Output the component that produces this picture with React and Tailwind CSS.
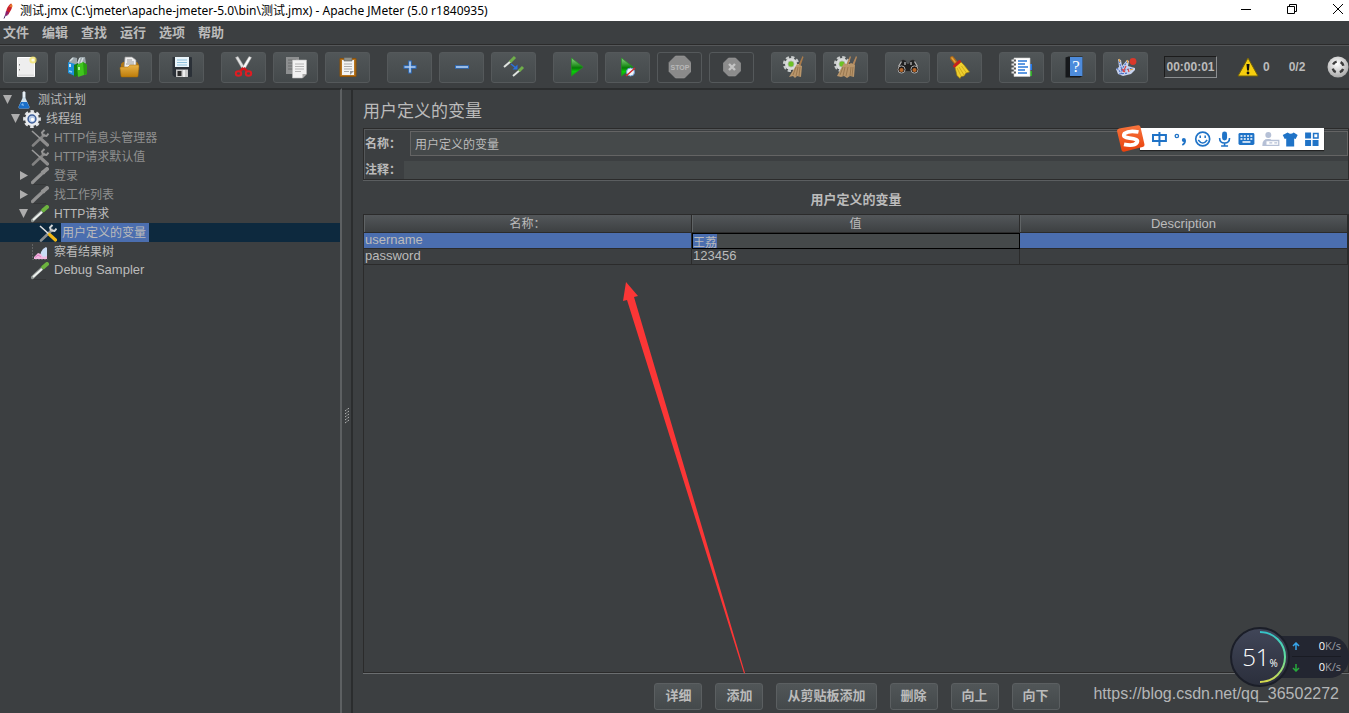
import React, { useState } from 'react';

const menus = ['文件', '编辑', '查找', '运行', '选项', '帮助'];

const Icon = ({ children }) => (
  <svg viewBox="0 0 24 24" className="h-6 w-6 shrink-0" fill="none">{children}</svg>
);

const Gradients = () => (
  <svg className="absolute h-0 w-0" aria-hidden="true">
    <defs>
      <linearGradient id="play" x1="0" y1="0" x2="0" y2="1">
        <stop offset="0" stopColor="#8fce86" />
        <stop offset="0.45" stopColor="#1f8f1c" />
        <stop offset="0.55" stopColor="#067a06" />
        <stop offset="0.75" stopColor="#08cc08" />
        <stop offset="1" stopColor="#0fa00f" />
      </linearGradient>
      <linearGradient id="folder" x1="0" y1="0" x2="0" y2="1">
        <stop offset="0" stopColor="#e9b347" />
        <stop offset="1" stopColor="#bd7c0a" />
      </linearGradient>
      <linearGradient id="ring" x1="0" y1="0" x2="0" y2="1">
        <stop offset="0" stopColor="#35c3c9" />
        <stop offset="0.5" stopColor="#5fe0a0" />
        <stop offset="1" stopColor="#d5d84c" />
      </linearGradient>
      <linearGradient id="sogou" x1="0" y1="0" x2="0" y2="1">
        <stop offset="0" stopColor="#f7743c" />
        <stop offset="1" stopColor="#e8400c" />
      </linearGradient>
      <radialGradient id="ball" cx="0.45" cy="0.35" r="0.65">
        <stop offset="0" stopColor="#ffffff" />
        <stop offset="1" stopColor="#a9a9a9" />
      </radialGradient>
    </defs>
  </svg>
);

const NewIcon = () => (
  <Icon>
    <path d="M4.500 2.500h17v19h-17z" fill="#eeeeee" stroke="#ffffff" />
    <path d="M5 19.500h16v2H5z" fill="#dcdcdc" />
    <path d="M6.500 9v1.500M6.500 14v1.500" stroke="#888" />
    <circle cx="20" cy="5" r="3.600" fill="#f2e36b" opacity="0.8" />
    <circle cx="20" cy="5" r="1.600" fill="#fffce0" />
  </Icon>
);

const TemplatesIcon = () => (
  <Icon>
    <path d="M4 6l4-4 4 1v5l3-6h5l1 6-8 5-9-2z" fill="#9aa5aa" />
    <path d="M5 6l3-3M15 3l-2 5M18 3l-2 5" stroke="#d5dde0" strokeWidth="1.500" />
    <path d="M3 7l7 2v12l-7-3z" fill="#1d8fd8" />
    <path d="M5 9v3" stroke="#fff" strokeWidth="1.600" />
    <path d="M4 16l3 1" stroke="#8fd0f5" strokeWidth="1.500" />
    <path d="M9 10l4-2v12l-3 2-1-1z" fill="#157a12" />
    <path d="M12 10l6-3 4 3v9l-9 3z" fill="#3fc51d" />
    <path d="M18 7l4 3v9l-3 1z" fill="#2a9b12" />
    <path d="M14 12v3" stroke="#d9ffd0" strokeWidth="1.500" />
  </Icon>
);

const OpenIcon = () => (
  <Icon>
    <path d="M4 9l2-2h14l2 3v5H4z" fill="#b07614" />
    <path d="M8 2h7l4 3v8H7z" fill="#f0f0f0" stroke="#8f8f8f" strokeWidth="0.7" />
    <path d="M10 5h5M10 7h7M9 9h8" stroke="#999" />
    <path d="M3 13q0-1 1-1h7l2-2h8q1 0 1 1l-1 10q0 1-1 1H5q-1 0-1-1z" fill="url(#folder)" stroke="#a96d06" strokeWidth="0.5" />
  </Icon>
);

const SaveIcon = () => (
  <Icon>
    <path d="M4 2h18q1 0 1 1v18q0 1-1 1H5.500l-2-2V2.500z" fill="#2b3138" />
    <path d="M6 2h14v10H6z" fill="#eaf5fb" />
    <path d="M8 5h10M8 7.500h10M8 10h10" stroke="#8fc1dc" />
    <path d="M7 14.500h12V22H7z" fill="#c9c9c9" />
    <path d="M8.500 16h4v5h-4z" fill="#2a2a2a" />
    <path d="M14 15h2v7h-2z" fill="#eee" />
  </Icon>
);

const CutIcon = () => (
  <Icon>
    <path d="M4.500 2.500l2.500-1 7 11.500-2.500 1.500z" fill="#e2e2e2" stroke="#a5a5a5" strokeWidth="0.5" />
    <path d="M20.500 2.500l-2.500-1-7 11.500 2.500 1.500z" fill="#f8f8f8" stroke="#a5a5a5" strokeWidth="0.5" />
    <path d="M12.500 13l-3.500 3M12.500 13l3.500 3" stroke="#d4141a" strokeWidth="2.400" />
    <ellipse cx="7.500" cy="18.500" rx="2.700" ry="2.200" stroke="#e01c22" strokeWidth="2" />
    <ellipse cx="17.500" cy="18.500" rx="2.700" ry="2.200" stroke="#e01c22" strokeWidth="2" />
  </Icon>
);

const CopyIcon = () => (
  <Icon>
    <path d="M3 2h13v17H3z" fill="#8d8f90" />
    <path d="M5 5h8M5 8h8M5 11h8M5 14h8" stroke="#6a6c6d" />
    <path d="M9.500 5h14v14l-4 4h-10z" fill="#f1f1f1" stroke="#bbb" strokeWidth="0.6" />
    <path d="M12 9h9M12 11.500h9M12 14h9M12 16.500h6" stroke="#b4b4b4" />
    <path d="M19.500 23v-4h4z" fill="#a8a8a8" />
  </Icon>
);

const PasteIcon = () => (
  <Icon>
    <path d="M5 3.500h16v18H5z" fill="#b8751d" stroke="#8c520a" />
    <path d="M7 5h12v15H7z" fill="#f4f4f4" />
    <path d="M9 2.500h8v3.500H9z" fill="#8c8f8a" stroke="#5b5d59" strokeWidth="0.6" />
    <path d="M9 9h8M9 11.500h8M9 14h8M9 16.500h5" stroke="#aaa" />
    <path d="M15 20v-4h4z" fill="#999" />
  </Icon>
);

const PlusIcon = () => (
  <Icon>
    <path d="M13 5.500v13M6.500 12h13" stroke="#2d6fc4" strokeWidth="3.400" />
    <path d="M13 6.500v11M7.500 12h11" stroke="#b5d0f0" strokeWidth="1.600" />
  </Icon>
);

const MinusIcon = () => (
  <Icon>
    <path d="M6 12h14" stroke="#2d6fc4" strokeWidth="3.400" />
    <path d="M7 12h12" stroke="#b5d0f0" strokeWidth="1.600" />
  </Icon>
);

const ToggleIcon = () => (
  <Icon>
    <path d="M3 12l7-6" stroke="#dfe3df" strokeWidth="2" />
    <path d="M9 7l5-5" stroke="#6fae4a" strokeWidth="3" />
    <path d="M12 21l7-6" stroke="#dfe3df" strokeWidth="2" />
    <path d="M18 16l4-4" stroke="#6fae4a" strokeWidth="3" />
    <path d="M10 9l5 4" stroke="#2b70dd" strokeWidth="1.500" />
    <path d="M16.500 9.500v5h-5z" fill="#2b70dd" />
  </Icon>
);

const PlayIcon = () => (
  <Icon>
    <path d="M8.500 3l11.500 9-11.500 9z" fill="url(#play)" stroke="#1f9a1b" strokeWidth="0.6" />
  </Icon>
);

const PlayNoTimersIcon = () => (
  <Icon>
    <path d="M6.500 3l11.500 9-11.500 9z" fill="url(#play)" stroke="#1f9a1b" strokeWidth="0.6" />
    <circle cx="15.500" cy="17" r="4" fill="#eef4fb" stroke="#6b9ad0" />
    <path d="M11 21l9-8" stroke="#d42626" strokeWidth="1.400" />
  </Icon>
);

const StopIcon = () => (
  <Icon>
    <path d="M8.500 1h9L24 7.500v9L17.500 23h-9L2 16.500v-9z" fill="#8a8a8a" stroke="#9b9b9b" strokeWidth="0.6" />
    <text x="13" y="15" textAnchor="middle" fontFamily="Liberation Sans, sans-serif" fontSize="7" fontWeight="700" fill="#b8b8b8">STOP</text>
  </Icon>
);

const ShutdownIcon = () => (
  <Icon>
    <path d="M9.500 3h7l5 5v8l-5 5h-7l-5-5V8z" fill="#8c8c8c" stroke="#9b9b9b" strokeWidth="0.6" />
    <path d="M10 9l6 6M16 9l-6 6" stroke="#c4c4c4" strokeWidth="2.400" />
  </Icon>
);

const Gear = ({ cx }) => (
  <g>
    <circle cx={cx} cy="9" r="6.800" stroke="#c9cccc" strokeWidth="2.600" strokeDasharray="3.200 2.140" />
    <circle cx={cx} cy="9" r="6" fill="#d9dbdb" />
    <circle cx={cx} cy="9" r="3" fill="#6cc225" stroke="#a9b5a0" strokeWidth="0.8" />
  </g>
);

const ClearIcon = () => (
  <Icon>
    <Gear cx="10" />
    <path d="M21.500 1l1 1-3 9-2-1z" fill="#a87b4c" />
    <path d="M16 9l5 2-1 11-4-1-2 2-2-2-4 1z" fill="#b9966b" />
    <path d="M15 12l-3 8M17 12l-2 9M19 12l-1 9" stroke="#8a6a44" strokeWidth="0.7" />
  </Icon>
);

const ClearAllIcon = () => (
  <Icon>
    <Gear cx="9" />
    <path d="M17 1l1 1-3 9-2-1zM23 1l1 1-3 9-2-1z" fill="#b3875a" />
    <path d="M11 8l4 2 3-2 4 2-1 12-4-1-3 2-3-2-3 1-4-1z" fill="#b9966b" />
    <path d="M10 12l-3 8M12 12l-2 9M15 12l-2 9M18 12l-1 9M20 12l-1 9" stroke="#8a6a44" strokeWidth="0.7" />
  </Icon>
);

const SearchIcon = () => (
  <Icon>
    <path d="M6 5.500l2-1 3 1 1 3h2l1-3 3-1 2 1 4 8v3H2v-3z" fill="#202020" stroke="#555" strokeWidth="0.6" />
    <path d="M6.500 6.500l-3 5M19.500 6.500l3 5M10 7v3M16 7v3" stroke="#b5b5b5" strokeWidth="1.300" />
    <circle cx="6.500" cy="14.500" r="3.600" fill="#1f1a17" stroke="#aaa" />
    <circle cx="19.500" cy="14.500" r="3.600" fill="#1f1a17" stroke="#aaa" />
    <circle cx="6.500" cy="15" r="2.100" fill="#b8672a" />
    <circle cx="19.500" cy="15" r="2.100" fill="#b8672a" />
  </Icon>
);

const ResetSearchIcon = () => (
  <Icon>
    <path d="M5 3l4 5" stroke="#ad6a17" strokeWidth="4" strokeLinecap="round" />
    <path d="M5 3l3 4" stroke="#e3a23b" strokeWidth="1.600" strokeLinecap="round" />
    <path d="M8 12l6-5 3 3 5.500 7-3.500 1-2 3-3 .5-1 2-3-3z" fill="#efcf2e" stroke="#a58208" strokeWidth="0.6" />
    <path d="M12 12l5 8M10 13l4 8M14.500 11l5 7" stroke="#c7a315" strokeWidth="0.8" />
    <path d="M7.500 11l5-4.500" stroke="#c8201c" strokeWidth="3" strokeLinecap="round" />
  </Icon>
);

const FunctionIcon = () => (
  <Icon>
    <path d="M20 9h3v6h-3z" fill="#2478e8" />
    <path d="M20 16h3v5h-3z" fill="#2fae28" />
    <path d="M5 3h16v18.500H5z" fill="#ffffff" stroke="#cfcfcf" strokeWidth="0.6" />
    <path d="M9 6h9M9 9h7M9 12h10M9 15h7M9 18h9" stroke="#2a78d8" strokeWidth="1.300" />
    <path d="M2.500 5.500h4M2.500 9.500h4M2.500 13.500h4M2.500 17.500h4" stroke="#dddddd" strokeWidth="1.800" />
    <path d="M6 4.500v2M6 8.500v2M6 12.500v2M6 16.500v2" stroke="#222" strokeWidth="1.400" />
  </Icon>
);

const HelpIcon = () => (
  <Icon>
    <path d="M4.500 2.500l3-1h14V21L19 22.500H4.500z" fill="#16181b" />
    <path d="M9 2h12.500v19H9z" fill="#4d8bdb" />
    <text x="15" y="17" textAnchor="middle" fontFamily="Liberation Serif, serif" fontSize="17" fill="#fff">?</text>
  </Icon>
);

const LogIcon = () => (
  <Icon>
    <path d="M5 4l3 1 1 6 5-6 2 1-1 5 7 2v2l-4 4-8 2-5-2-2-5 3-2z" fill="#c7d3ee" />
    <path d="M6 6l3 9M8 15l6-8M8 16l12-3M4 13l5 6M6 19l9-1" stroke="#4b6fc5" strokeWidth="1.100" strokeDasharray="2 1" />
    <path d="M9 14l3 3M13 11l-3 6M15 14l1 3" stroke="#d94444" strokeWidth="1.200" />
    <path d="M6 4l1 3M20 14l-3 1M14 5l1 3" stroke="#e8a33a" strokeWidth="1.200" />
    <circle cx="20" cy="6.500" r="3.400" fill="#d9382b" />
  </Icon>
);

const toolGroups = [
  [['新建', NewIcon], ['模板', TemplatesIcon], ['打开', OpenIcon], ['保存', SaveIcon]],
  [['剪切', CutIcon], ['复制', CopyIcon], ['粘贴', PasteIcon]],
  [['展开', PlusIcon], ['折叠', MinusIcon], ['切换', ToggleIcon]],
  [['启动', PlayIcon], ['不停顿开始', PlayNoTimersIcon], ['停止', StopIcon, true], ['关闭', ShutdownIcon, true]],
  [['清除', ClearIcon], ['清除全部', ClearAllIcon]],
  [['搜索', SearchIcon], ['重置搜索', ResetSearchIcon]],
  [['函数助手', FunctionIcon], ['帮助', HelpIcon], ['日志', LogIcon]],
];

const TreeSvg = ({ children }) => (
  <svg viewBox="0 0 18 18" className="h-[18px] w-[18px] shrink-0" fill="none">{children}</svg>
);

const FlaskIcon = () => (
  <TreeSvg>
    <path d="M7.500 1h3v6l4 9q0 1.500-1.500 1.500H5Q3.500 17.500 3.500 16l4-9z" fill="#cfe0ec" />
    <path d="M6 11h6l2.500 5q0 1.500-1.500 1.500H5Q3.500 17.500 3.500 16z" fill="#1a6fc9" />
    <path d="M6 14l2-2 1 3z" fill="#7db8f0" />
    <path d="M9 0v6" stroke="#fff" />
  </TreeSvg>
);

const ThreadIcon = () => (
  <TreeSvg>
    <circle cx="9" cy="9" r="7.600" stroke="#e2e4e6" strokeWidth="2.600" strokeDasharray="3.500 2.469" strokeDashoffset="1.750" />
    <circle cx="9" cy="9" r="7" fill="#eceef0" />
    <circle cx="9" cy="9" r="3.900" fill="#b9cdea" stroke="#3f5f98" strokeWidth="1.500" />
    <circle cx="9.500" cy="9.500" r="1.700" fill="#fff" />
  </TreeSvg>
);

const ToolsIcon = ({ active }) => (
  <TreeSvg>
    <path d="M2 16.500L13 6" stroke={active ? '#8b8f91' : '#828282'} strokeWidth="2.600" strokeLinecap="round" />
    <path d="M12 6.500l-1-3L13.500 1M12.500 6.500l3 .5L17.500 4.500" stroke={active ? '#d5d8d9' : '#959595'} strokeWidth="2" />
    <path d="M1 2l10 9" stroke={active ? '#e2e2e2' : '#999'} strokeWidth="1.600" />
    <path d="M10.500 10.500l6 5.500" stroke={active ? '#f0b816' : '#8d8d8d'} strokeWidth="3.200" strokeLinecap="round" />
  </TreeSvg>
);

const PipetteIcon = ({ active }) => (
  <TreeSvg>
    <path d="M1 17.500h14" stroke="#333536" />
    <path d="M1.500 15.500l3-3L11 6.500" stroke={active ? '#8f9592' : '#8d8d8d'} strokeWidth="3.200" strokeLinecap="round" />
    <path d="M2 15L11 7" stroke={active ? '#eef2ef' : '#949494'} strokeWidth="1.800" />
    <path d="M10.500 4l3 3" stroke={active ? '#3c7d22' : '#909090'} strokeWidth="2" />
    <path d="M12.500 5l3.500-3" stroke={active ? '#6db33f' : '#939393'} strokeWidth="4" strokeLinecap="round" />
  </TreeSvg>
);

const ResultIcon = () => (
  <TreeSvg>
    <path d="M1.500 1v15.500h15" stroke="#606365" strokeDasharray="2 1" />
    <path d="M9 15q0-6 3-9l3-2 1 1v11H9z" fill="#c9dcf5" />
    <path d="M3 16v-2l4-4 3 1 2 3 4-1v3z" fill="#f0b8e0" />
    <path d="M4 14.500l3-2.500 3 2" stroke="#e27cc6" />
  </TreeSvg>
);

const treeNodes = [
  { text: '测试计划', pad: 'pl-[2px]', arrow: 'down', icon: <FlaskIcon /> },
  { text: '线程组', pad: 'pl-[10px]', arrow: 'down', icon: <ThreadIcon /> },
  { text: 'HTTP信息头管理器', pad: 'pl-[18px]', icon: <ToolsIcon />, disabled: true },
  { text: 'HTTP请求默认值', pad: 'pl-[18px]', icon: <ToolsIcon />, disabled: true },
  { text: '登录', pad: 'pl-[18px]', arrow: 'right', icon: <PipetteIcon />, disabled: true },
  { text: '找工作列表', pad: 'pl-[18px]', arrow: 'right', icon: <PipetteIcon />, disabled: true },
  { text: 'HTTP请求', pad: 'pl-[18px]', arrow: 'down', icon: <PipetteIcon active /> },
  { text: '用户定义的变量', pad: 'pl-[26px]', icon: <ToolsIcon active />, selected: true },
  { text: '察看结果树', pad: 'pl-[18px]', icon: <ResultIcon /> },
  { text: 'Debug Sampler', pad: 'pl-[18px]', icon: <PipetteIcon active />, latin: true },
];

const TitleBar = () => (
  <header className="flex h-[21px] items-center bg-white pl-[3px] text-black">
    <svg viewBox="0 0 12 16" className="h-4 w-3" fill="none">
      <path d="M3 9Q4 3 8 .5q2 3 0 6.500l-3 5z" fill="#c8202c" />
      <path d="M6 3.500l2.500-3q1.500 2 .5 4z" fill="#e8762c" />
      <path d="M3 8l3 1-2 4-2-1z" fill="#8a1f6e" />
      <path d="M2.500 12L1 15.500" stroke="#4b2a6b" />
    </svg>
    <h1 className="ml-[5px] font-['Noto_Sans','Noto_Sans_CJK_SC',sans-serif] text-[12px] whitespace-nowrap">
      测试.jmx (C:\jmeter\apache-jmeter-5.0\bin\测试.jmx) - Apache JMeter (5.0 r1840935)
    </h1>
    <div className="ml-auto flex h-full items-center gap-[34px] pr-[5px] pb-1">
      <button type="button" aria-label="最小化">
        <svg viewBox="0 0 12 12" className="h-3 w-3" fill="none"><path d="M1 6.500h10" stroke="#000" /></svg>
      </button>
      <button type="button" aria-label="还原">
        <svg viewBox="0 0 12 12" className="h-3 w-3" fill="none" stroke="#000">
          <path d="M1.500 3.500h7v7h-7zM3.500 3.500v-2h7v7h-2" />
        </svg>
      </button>
      <button type="button" aria-label="关闭">
        <svg viewBox="0 0 12 12" className="h-3 w-3" fill="none" stroke="#000"><path d="M1 1l10 10M11 1L1 11" /></svg>
      </button>
    </div>
  </header>
);

const ToolBar = () => (
  <div className="flex h-[43px] items-center overflow-hidden border-t border-[#555759] pl-[3px]">
    <div className="flex shrink-0 gap-[17px]">
      {toolGroups.map((group) => (
        <div key={group[0][0]} className="flex gap-[7px]">
          {group.map(([name, ToolIcon, off]) => (
            <button
              key={name}
              type="button"
              aria-label={name}
              disabled={off}
              className={`flex h-[31px] w-[45px] items-center justify-center rounded-[3px] border border-[#55595b] pr-px pb-px ${off ? '' : 'bg-linear-to-b from-[#515658] to-[#44494b]'}`}
            >
              <ToolIcon />
            </button>
          ))}
        </div>
      ))}
    </div>
    <div className="ml-4 flex shrink-0 items-center text-[12px] font-bold">
      <time className="flex h-[22px] w-[53px] items-center justify-center border border-t-[#1c1c1c] border-r-[#8b8e90] border-b-[#8b8e90] border-l-[#1c1c1c]">
        00:00:01
      </time>
      <svg viewBox="0 0 22 20" className="ml-[20px] h-5 w-[22px]">
        <path d="M11 1l10 18H1z" fill="#f6ce0e" stroke="#73620b" />
        <path d="M9.500 7h3l-.6 6.500h-1.800z" fill="#111" />
        <circle cx="11" cy="16" r="1.400" fill="#111" />
      </svg>
      <span className="ml-[4px]">0</span>
      <span className="ml-[19px]">0/2</span>
      <svg viewBox="0 0 22 22" className="ml-[22px] h-[22px] w-[22px]">
        <circle cx="11" cy="11" r="10.500" fill="url(#ball)" />
        <circle cx="11" cy="11" r="5.500" fill="none" stroke="#3b3b3b" strokeWidth="2.400" strokeDasharray="4.500 4.140" strokeDashoffset="-2.070" />
      </svg>
    </div>
  </div>
);

const Tree = () => (
  <nav className="w-[342px] shrink-0 border-t-2 border-r-2 border-t-[#2b2d2e] border-r-[#5d6062]">
    <ul>
      {treeNodes.map((node) => (
        <li key={node.text} className={`flex h-[19px] items-center ${node.pad} ${node.selected ? 'bg-[#0d293e]' : ''}`}>
          <svg viewBox="0 0 10 10" className="h-[10px] w-[10px] shrink-0" fill="#adadad">
            {node.arrow === 'down' && <path d="M1 0h9L5.500 9z" />}
            {node.arrow === 'right' && <path d="M2 0v9l8-4.500z" />}
          </svg>
          <span className="ml-[3px]">{node.icon}</span>
          <span
            className={`ml-[4px] h-[19px] pr-[3px] pl-px whitespace-nowrap ${node.latin ? 'text-[13px] leading-[17px]' : 'text-[12px] leading-[21px]'} ${node.disabled ? 'text-[#8f8f8f]' : ''} ${node.selected ? 'bg-[#4b6eaf]' : ''}`}
          >
            {node.text}
          </span>
        </li>
      ))}
    </ul>
  </nav>
);

const ImeBar = () => (
  <div className="absolute top-[35px] right-[25px] flex h-[27px] items-center" aria-label="输入法">
    <svg viewBox="0 0 28 27" className="relative -mr-[5px] h-[27px] w-7">
      <path d="M0 6q0-2 2-2.500L21 .3q2-.3 2.500 1.700L27.500 19.500q.3 2-2 2.500L7 26.700q-2 .3-2.500-1.700z" fill="url(#sogou)" />
      <path d="M21.500 7Q12 5 7.500 8.500q-2.500 4 5 4.700 9.500.8 7.500 4.300-3 4-13 1.800" fill="none" stroke="#fff" strokeWidth="3.800" />
    </svg>
    <div className="flex h-[22px] w-[184px] items-center bg-white pl-[11px] shadow-[0_1px_1px_#222]">
      <svg viewBox="0 0 174 22" className="h-[22px] w-[174px]" fill="none" stroke="#1f73c7">
        <path d="M2 7h13v6H2zM8.500 4v14" strokeWidth="2" />
        <circle cx="26" cy="8" r="1.700" strokeWidth="1.300" />
        <circle cx="33" cy="12" r="2" fill="#1f73c7" stroke="none" />
        <path d="M34 12q1 3-2.500 5" strokeWidth="1.800" />
        <circle cx="52" cy="11" r="7" strokeWidth="1.700" />
        <path d="M49.500 7.500v2.500M54.500 7.500v2.500M47.500 12q4.500 6 9 0" strokeWidth="1.500" />
        <rect x="71.500" y="3.500" width="5" height="9" rx="2.500" fill="#1f73c7" stroke="none" />
        <path d="M69 10q0 5 5 5t5-5M74 15v3M70.500 18h7" strokeWidth="1.600" />
        <rect x="88" y="5" width="16" height="12" rx="1.500" fill="#1f73c7" stroke="none" />
        <path d="M90 8h12M90 11h12" stroke="#fff" strokeDasharray="2 1.300" strokeWidth="1.600" />
        <path d="M92 14h8" stroke="#fff" strokeWidth="1.500" />
        <circle cx="118" cy="7" r="3" fill="#b5c0d6" stroke="none" />
        <path d="M112 17q0-6 6-6 3 0 4 2l-4 5h-6z" fill="#b5c0d6" stroke="none" />
        <path d="M115.500 12.500h13v5h-13zM119 15h3M124 15h3" stroke="#b5c0d6" fill="#fff" strokeWidth="1.300" />
        <path d="M137.500 4.500q3 2.500 6 0l4 2.500-2 4-1.500-.5v8h-8v-8l-1.500.5-2-4z" fill="#1f73c7" stroke="none" />
        <path d="M155 4.500h6v6h-6zM155 12h6v6h-6zM162.500 12h6v6h-6z" fill="#1f73c7" stroke="none" />
        <path d="M163.500 5.500h4.500v4.500h-4.500z" strokeWidth="1.500" />
      </svg>
    </div>
  </div>
);

const Pointer = () => (
  <svg viewBox="0 0 124 394" className="pointer-events-none absolute top-[192px] left-[270px] h-[394px] w-[124px]">
    <path d="M3 0l12 14-4 1 111 376-1 .5L4 18l-4 1z" fill="#fb3636" />
  </svg>
);

const SpeedMonitor = () => (
  <div className="absolute right-0 bottom-[26px] flex h-[60px] items-center font-['Open_Sans',sans-serif]">
    <div className="relative z-10 flex h-[60px] w-[60px] items-center justify-center rounded-full border-2 border-[#1b1e28] bg-linear-to-b from-[#414658] to-[#2b2f3c] text-white">
      <svg viewBox="0 0 60 60" className="absolute h-[60px] w-[60px]" fill="none">
        <path d="M30 5a25 25 0 0 1 0 50" stroke="url(#ring)" strokeWidth="2" />
      </svg>
      <span className="text-[24px] leading-6 font-light">51</span>
      <span className="self-end pb-[14px] text-[10px]">%</span>
    </div>
    <div className="-ml-5 h-[42px] w-[79px] rounded-r-[20px] bg-[#232631] pr-2 pl-[22px] text-[11px] text-[#9b9da3]">
      <p className="flex h-[21px] items-center border-b border-[#191b23]">
        <svg viewBox="0 0 8 8" className="h-2 w-2" fill="none" stroke="#37a5ea" strokeWidth="1.500"><path d="M4 8V1M1 4l3-3 3 3" /></svg>
        <span className="ml-auto text-white">0</span>K/s
      </p>
      <p className="flex h-[21px] items-center">
        <svg viewBox="0 0 8 8" className="h-2 w-2" fill="none" stroke="#27a93c" strokeWidth="1.500"><path d="M4 0v7M1 4l3 3 3-3" /></svg>
        <span className="ml-auto text-white">0</span>K/s
      </p>
    </div>
  </div>
);

const VariablesPanel = () => {
  const [name, setName] = useState('用户定义的变量');
  const [comment, setComment] = useState('');
  const [value, setValue] = useState('王荔');

  const th = 'h-[18px] border-r border-b border-[#2b2b2b] bg-linear-to-b from-[#53575a] to-[#3d4042] font-normal shadow-[inset_1px_0_0_#5f6365]';
  const td = 'h-4 border-r border-b border-[#2b2b2b] p-0 pl-px align-top leading-[14px]';

  return (
    <main className="relative flex min-w-0 flex-1 flex-col border-t-2 border-l-2 border-[#2b2d2e] pl-[10px]">
      <h2 className="flex h-[38px] items-center pt-[6px] text-[17px]">用户定义的变量</h2>

      <form className="flex h-[52px] flex-col gap-[5px] border border-[#2b2b2b] pt-[2px] shadow-[inset_1px_1px_0_#55585a,0_1px_0_#5b5e60]">
        <div className="flex h-[25px] items-center">
          <label htmlFor="name" className="w-[46px] pl-px text-[12px] font-bold whitespace-nowrap">名称：</label>
          <input
            id="name"
            value={name}
            onChange={(e) => setName(e.target.value)}
            className="h-full min-w-0 flex-1 border border-[#646464] bg-[#45494a] px-1 pb-px text-[12px] outline-none"
          />
        </div>
        <div className="flex h-[18px] items-center">
          <label htmlFor="comment" className="w-[40px] pl-px text-[12px] font-bold whitespace-nowrap">注释：</label>
          <input
            id="comment"
            value={comment}
            onChange={(e) => setComment(e.target.value)}
            className="h-full min-w-0 flex-1 bg-[#45494a] px-1 text-[12px] outline-none"
          />
        </div>
      </form>

      <h3 className="flex h-[34px] items-center justify-center pt-[6px] text-[13px] font-bold">用户定义的变量</h3>

      <div className="flex-1 border border-[#2b2b2b] shadow-[0_1px_0_#6b6e70]">
        <table className="w-full table-fixed border-separate border-spacing-0 text-[13px]">
          <thead>
            <tr>
              <th className={`${th} p-0 pt-[2px] text-[12px] leading-[15px]`}>名称：</th>
              <th className={`${th} p-0 pt-[2px] text-[12px] leading-[15px]`}>值</th>
              <th className={`${th} p-0 leading-[17px]`}>Description</th>
            </tr>
          </thead>
          <tbody>
            <tr className="bg-[#4b6eaf]">
              <td className={td}>username</td>
              <td className="h-4 p-0">
                <input
                  aria-label="值"
                  autoFocus
                  value={value}
                  onFocus={(e) => e.target.select()}
                  onChange={(e) => setValue(e.target.value)}
                  className="block h-4 w-full border border-black bg-[#45494a] text-[12px] leading-[14px] outline-none selection:bg-[#4b6eaf] selection:text-[#bbbbbb]"
                />
              </td>
              <td className={td} />
            </tr>
            <tr>
              <td className={td}>password</td>
              <td className={td}>123456</td>
              <td className={td} />
            </tr>
          </tbody>
        </table>
      </div>

      <div className="flex justify-center gap-[13px] pt-[10px] pb-[3px] pl-[2px]">
        {['详细', '添加', '从剪贴板添加', '删除', '向上', '向下'].map((text) => (
          <button
            key={text}
            type="button"
            className="h-[27px] rounded-[3px] border border-[#5b5f61] bg-linear-to-b from-[#515658] to-[#44494b] px-[10px] pb-[2px] text-[13px] leading-[23px] font-bold whitespace-nowrap"
          >
            {text}
          </button>
        ))}
      </div>

      <ImeBar />
      <Pointer />
      <a href="https://blog.csdn.net/qq_36502272" className="absolute right-[10px] bottom-[10px] text-[16px] leading-[18px] text-[#b4b6b7]">
        https://blog.csdn.net/qq_36502272
      </a>
      <SpeedMonitor />
    </main>
  );
};

const App = () => {
  return (
    <div className="flex min-h-screen flex-col overflow-hidden bg-[#3c3f41] font-['Liberation_Sans','Noto_Sans_CJK_SC',sans-serif] text-[#bbbbbb]">
      <Gradients />
      <TitleBar />
      <div className="flex h-6 items-center gap-[13px] border-b border-[#2b2b2b] pl-[3px] text-[13px] font-bold">
        {menus.map((menu) => (
          <button key={menu} type="button">{menu}</button>
        ))}
      </div>
      <ToolBar />
      <div className="flex flex-1">
        <Tree />
        <div className="flex w-[9px] shrink-0 cursor-col-resize items-center justify-center border-t-2 border-[#2b2d2e] pt-7">
          <svg viewBox="0 0 4 16" className="h-4 w-1" fill="none" stroke="#d5d5d5">
            <path d="M0 3l4-3M0 6l4-3M0 9l4-3M0 12l4-3M0 15l4-3" strokeDasharray="1 1" />
          </svg>
        </div>
        <VariablesPanel />
      </div>
    </div>
  );
};

export default App;
